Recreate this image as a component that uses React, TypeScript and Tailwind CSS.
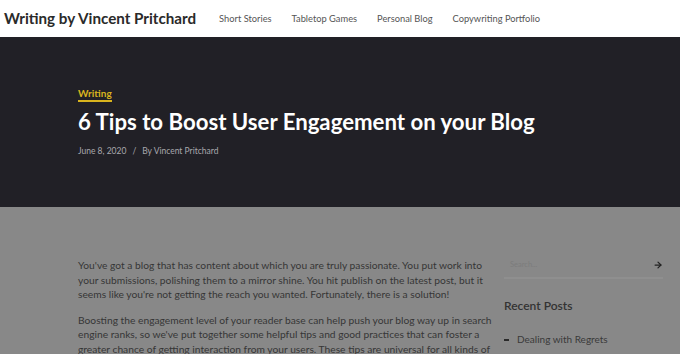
import { ArrowRight } from "lucide-react";

const navItems = ["Short Stories", "Tabletop Games", "Personal Blog", "Copywriting Portfolio"];

const para1 = [
  "You've got a blog that has content about which you are truly passionate. You put work into",
  "your submissions, polishing them to a mirror shine. You hit publish on the latest post, but it",
  "seems like you're not getting the reach you wanted. Fortunately, there is a solution!",
];

const para2 = [
  "Boosting the engagement level of your reader base can help push your blog way up in search",
  "engine ranks, so we've put together some helpful tips and good practices that can foster a",
  "greater chance of getting interaction from your users. These tips are universal for all kinds of",
];

export default function App() {
  return (
    <div className="flex h-[354px] w-[680px] flex-col overflow-hidden bg-[#888888] font-['Lato',sans-serif]">
      {/* ── Header ─────────────────────────────────────────────── */}
      <header className="flex h-[37px] shrink-0 items-center bg-white pl-[4px]">
        <span className="text-[15.2px] font-bold text-[#2a2a2a]">
          Writing by Vincent Pritchard
        </span>
        <nav className="ml-[23px] flex items-center gap-[20px]">
          {navItems.map((item) => (
            <span key={item} className="text-[9.3px] text-[#555]">
              {item}
            </span>
          ))}
        </nav>
      </header>

      {/* ── Hero ───────────────────────────────────────────────── */}
      <section className="flex h-[170px] shrink-0 flex-col bg-[#212026] pl-[78px] pt-[50px]">
        <span className="w-fit border-b-2 border-[#d9b41e] text-[10px] font-bold leading-[13px] text-[#d9b41e]">
          Writing
        </span>
        <h1 className="mt-[6px] text-[22.2px] font-bold leading-[28px] text-white">
          6 Tips to Boost User Engagement on your Blog
        </h1>
        <div className="mt-[9px] flex items-center text-[8.5px] text-[#a8a8ad]">
          <span>June 8, 2020</span>
          <span className="mx-[6px]">/</span>
          <span>By Vincent Pritchard</span>
        </div>
      </section>

      {/* ── Main ───────────────────────────────────────────────── */}
      <main className="flex flex-1 pl-[78px] pt-[51px]">
        <div className="w-[404px] text-[10.25px] leading-[14.5px] text-[#363636]">
          <p>
            {para1.map((l) => (
              <span key={l} className="block whitespace-nowrap">{l}</span>
            ))}
          </p>
          <p className="mt-[11px]">
            {para2.map((l) => (
              <span key={l} className="block whitespace-nowrap">{l}</span>
            ))}
          </p>
        </div>

        <aside className="ml-[22px] w-[159px]">
          <div className="flex items-center justify-between border-b-2 border-[#8f8f8f] pb-[7px] pl-[6px] pt-[1px]">
            <span className="text-[7.5px] text-[#7c7c7c]">Search...</span>
            <ArrowRight className="h-[10px] w-[10px] text-[#222]" strokeWidth={3} />
          </div>
          <h3 className="mt-[18px] text-[12px] font-semibold text-[#333]">Recent Posts</h3>
          <div className="mt-[17px] flex items-center gap-[8px] text-[10px] text-[#3a3a3a]">
            <span className="h-[2px] w-[5px] bg-[#2a2a2a]" />
            <span>Dealing with Regrets</span>
          </div>
        </aside>
      </main>
    </div>
  );
}
